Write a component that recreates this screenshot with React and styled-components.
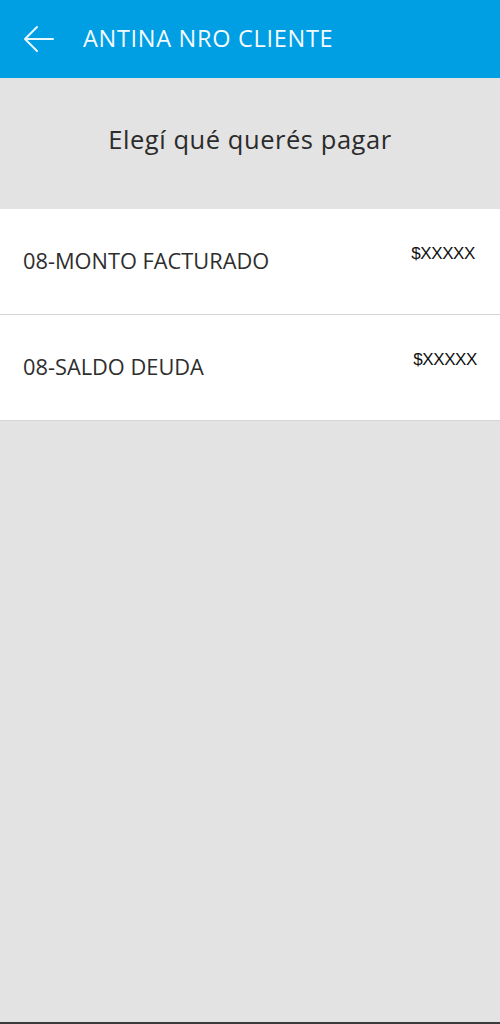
import React from "react";
import styled, { createGlobalStyle } from "styled-components";

const Global = createGlobalStyle`
  html, body { margin: 0; padding: 0; }
  body { background: #e3e3e3; font-family: "Open Sans", "Noto Sans", sans-serif; }
`;

const Screen = styled.div`
  width: 500px;
  height: 1024px;
  display: flex;
  flex-direction: column;
  background: #e3e3e3;
  box-sizing: border-box;
  border-bottom: 2px solid #3a3a3a;
`;

const Toolbar = styled.header`
  height: 78px;
  flex-shrink: 0;
  background: #009ee3;
  display: flex;
  align-items: center;
  padding-left: 23px;
  gap: 28px;
  box-sizing: border-box;
`;

const BackButton = styled.button`
  border: 0;
  background: none;
  padding: 0;
  width: 32px;
  height: 28px;
  display: flex;
  align-items: center;
  justify-content: center;
`;

const Title = styled.h1`
  margin: 0;
  color: #f4fbff;
  font-size: 23.5px;
  font-weight: 400;
  letter-spacing: 0.7px;
  line-height: 1;
  margin-bottom: 1px;
`;

const Heading = styled.div`
  height: 131px;
  flex-shrink: 0;
  display: flex;
  align-items: center;
  justify-content: center;
  color: #2b2b2b;
  font-size: 25.5px;
  letter-spacing: 0.55px;
  padding-bottom: 10px;
  box-sizing: border-box;
`;

const List = styled.ul`
  margin: 0;
  padding: 0;
  list-style: none;
`;

const Row = styled.li`
  height: 106px;
  background: #fff;
  border-bottom: 1px solid #d6d6d6;
  box-sizing: border-box;
  display: flex;
  justify-content: space-between;
  padding: 0 ${(p) => p.$right}px 0 23px;
`;

const Label = styled.span`
  align-self: center;
  margin-bottom: 2px;
  font-size: 21.8px;
  color: #2e2e2e;
`;

const Amount = styled.span`
  margin-top: 35px;
  font-family: "Liberation Sans", Arial, sans-serif;
  font-size: 17px;
  color: #111;
  letter-spacing: -0.4px;
`;

const rows = [
  { label: "08-MONTO FACTURADO", amount: "$XXXXX", right: 25 },
  { label: "08-SALDO DEUDA", amount: "$XXXXX", right: 23 },
];

export default function App() {
  return (
    <>
      <Global />
      <Screen>
        <Toolbar>
          <BackButton aria-label="Volver">
            <svg width="32" height="28" viewBox="0 0 32 28" fill="none">
              <path
                d="M30 14H3M14 2L2 14l12 12"
                stroke="#e8f6ff"
                strokeWidth="2"
                strokeLinecap="round"
                strokeLinejoin="round"
              />
            </svg>
          </BackButton>
          <Title>ANTINA NRO CLIENTE</Title>
        </Toolbar>
        <Heading>Elegí qué querés pagar</Heading>
        <List>
          {rows.map((r) => (
            <Row key={r.label} $right={r.right}>
              <Label>{r.label}</Label>
              <Amount>{r.amount}</Amount>
            </Row>
          ))}
        </List>
      </Screen>
    </>
  );
}
